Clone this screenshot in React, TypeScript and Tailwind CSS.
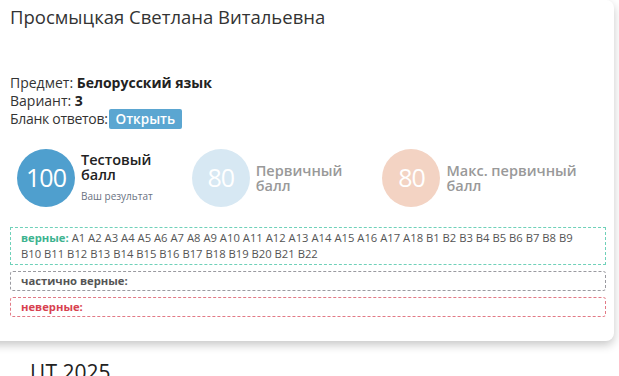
import React from 'react';

const font = { fontFamily: '"Open Sans", "Noto Sans", sans-serif' };

function Score({ value, circle, title, titleColor, sub }: { value: string; circle: string; title: string[]; titleColor: string; sub?: string }) {
  return (
    <div className="flex items-center gap-[6px]">
      <div className={`w-[58px] h-[58px] rounded-full flex items-center justify-center text-white text-[25px] font-medium tracking-[-1px] ${circle}`}>
        {value}
      </div>
      <div className="flex flex-col">
        <div className={`text-[14.5px] leading-[15px] font-semibold ${titleColor}`}>
          {title.map((t) => (
            <div key={t}>{t}</div>
          ))}
        </div>
        {sub && <div className="text-[10px] text-gray-500 mt-[7px]">{sub}</div>}
      </div>
    </div>
  );
}

export default function App() {
  const correct =
    'A1 A2 A3 A4 A5 A6 A7 A8 A9 A10 A11 A12 A13 A14 A15 A16 A17 A18 B1 B2 B3 B4 B5 B6 B7 B8 B9 B10 B11 B12 B13 B14 B15 B16 B17 B18 B19 B20 B21 B22';

  return (
    <main className="w-[619px] h-[376px] overflow-hidden bg-white text-[#212529]" style={font}>
      {/* Result card */}
      <div className="-ml-[14px] w-[628px] bg-white rounded-lg shadow-[0_4px_10px_rgba(0,0,0,0.22)] pl-[24px] pr-[8px] pt-[4px] pb-[24px]">
        <h2 className="text-[18.5px] leading-[26px] text-[#333] font-normal">Просмыцкая Светлана Витальевна</h2>

        <div className="mt-[44px] text-[14px] leading-[17.5px] text-[#333]">
          <div>
            Предмет: <b className="font-bold text-[#222]">Белорусский язык</b>
          </div>
          <div>
            Вариант: <b className="font-bold text-[#222]">3</b>
          </div>
          <div className="flex items-center gap-[1px]">
            <span className="tracking-[-0.3px]">Бланк ответов:</span>
            <span className="bg-[#5ba6d1] text-white font-semibold text-[13.5px] leading-[20px] px-[7px] rounded-[2px]">Открыть</span>
          </div>
        </div>

        <div className="mt-[20px] flex items-center pl-[7px]">
          <Score value="100" circle="bg-[#4f9fce]" title={['Тестовый', 'балл']} titleColor="text-[#222]" sub="Ваш результат" />
          <div className="ml-[39px]">
            <Score value="80" circle="bg-[#d7e8f3]" title={['Первичный', 'балл']} titleColor="text-[#999]" />
          </div>
          <div className="ml-[40px]">
            <Score value="80" circle="bg-[#f3d3c3]" title={['Макс. первичный', 'балл']} titleColor="text-[#999]" />
          </div>
        </div>

        <div className="mt-[20px] flex flex-col gap-[6px] text-[11.25px] leading-[16px] text-[#555]">
          <div className="border border-dashed border-[#6fd1b9] px-[10px] py-[2px] w-[596px]">
            <span className="font-bold text-[#3db38f]">верные:</span> {correct}
          </div>
          <div className="border border-dashed border-[#9a9aa0] rounded-[3px] px-[10px] py-[1px] w-[596px]">
            <span className="font-bold text-[#555]">частично верные:</span>
          </div>
          <div className="border border-dashed border-[#e27a86] rounded-[3px] px-[10px] py-[1px] w-[596px]">
            <span className="font-bold text-[#d8414f]">неверные:</span>
          </div>
        </div>
      </div>

      <h2 className="mt-[17px] pl-[30px] text-[21px] leading-[28px] text-[#222]">ЦТ 2025</h2>
    </main>
  );
}
